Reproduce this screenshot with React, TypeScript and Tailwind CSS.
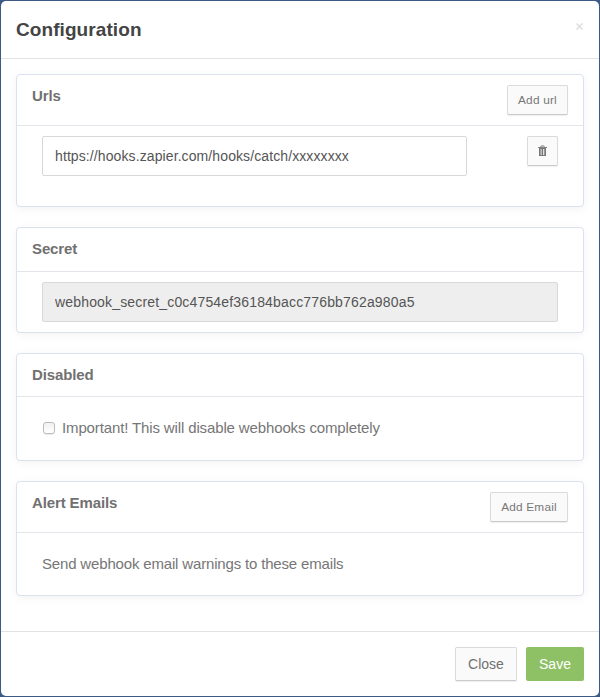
import type { ReactNode } from "react";

const smallButton =
  "flex h-[30px] shrink-0 items-center justify-center rounded-[2px] border border-[#dadada] border-b-[#cacaca] bg-[#fafafa] text-[11.8px] leading-[18px] tracking-[0.22px] text-[#777] shadow-[0_1px_1px_rgba(90,90,90,0.1)]";

function Panel({
  title,
  action,
  className,
  headClass,
  children,
}: {
  title: string;
  action?: ReactNode;
  className: string;
  headClass: string;
  children: ReactNode;
}) {
  return (
    <section
      className={`flex flex-col rounded-[4px] border border-[#dbe2ef] bg-white shadow-[0_2px_10px_rgba(0,0,0,0.05)] ${className}`}
    >
      <header
        className={`flex shrink-0 items-start justify-between border-b border-[#e2e5ea] px-[15px] pt-[10px] ${headClass}`}
      >
        <h2 className="text-[15px] leading-[22px] font-bold tracking-[-0.12px] text-[#717171]">{title}</h2>
        {action}
      </header>
      <div className="flex-1 px-[25px]">{children}</div>
    </section>
  );
}

function TrashIcon() {
  return (
    <svg width="9" height="11" viewBox="0 0 9 11" shapeRendering="crispEdges" className="mb-[2px]">
      <path d="M3 0h3v1H3z" fill="#b8b8b8" />
      <path d="M2 1h5v1H2z" fill="#b0b0b0" />
      <path d="M0 2h9v1H0z" fill="#858585" />
      <path d="M1 3h7v8H1z" fill="#777" />
      <path d="M2 4h1v6H2z" fill="#a2a2a2" />
      <path d="M3 4h1v6H3z" fill="#bcbcbc" />
      <path d="M5 4h1v6H5z" fill="#e2e2e2" />
      <path d="M6 4h1v6H6z" fill="#999" />
    </svg>
  );
}

export default function App() {
  return (
    <div className="h-[697px] w-[600px] bg-[#3d5a85] p-px font-['Liberation_Sans',Arial,sans-serif]">
      <div className="flex h-[695px] w-[598px] flex-col rounded-[5px] bg-white">
        <header className="flex h-[58px] shrink-0 items-start justify-between border-b border-[#e2e2e2] px-[15px]">
          <h1 className="pt-[15px] text-[19px] leading-[27px] font-bold tracking-[0.08px] text-[#444]">
            Configuration
          </h1>
          <button aria-label="Close dialog" className="mt-[22px] mr-[1px] flex">
            <svg width="7" height="7" viewBox="0 0 7 7" stroke="#dedede" strokeWidth="1.5">
              <path d="M.5.5l6 6M6.5.5l-6 6" />
            </svg>
          </button>
        </header>

        <main className="flex flex-1 flex-col gap-5 px-[15px] pt-[15px]">
          <Panel
            title="Urls"
            className="h-[133px]"
            headClass="h-[51px]"
            action={<button className={`w-[61px] ${smallButton}`}>Add url</button>}
          >
            <div className="flex items-start justify-between pt-[10px]">
              <input
                readOnly
                value="https://hooks.zapier.com/hooks/catch/xxxxxxxx"
                className="h-10 w-[425px] rounded-[2px] border border-[#d8d8d8] bg-white px-3 text-[14px] tracking-[0.1px] text-[#555] outline-none"
              />
              <button aria-label="Delete url" className={`w-[31px] ${smallButton}`}>
                <TrashIcon />
              </button>
            </div>
          </Panel>

          <Panel title="Secret" className="h-[106px]" headClass="h-[44px]">
            <div className="pt-[10px]">
              <input
                readOnly
                value="webhook_secret_c0c4754ef36184bacc776bb762a980a5"
                className="h-10 w-full rounded-[2px] border border-[#d8d8d8] bg-[#eee] px-3 text-[14px] tracking-[0.165px] text-[#555] outline-none"
              />
            </div>
          </Panel>

          <Panel title="Disabled" className="h-[108px]" headClass="h-[43px]">
            <label className="flex items-center pt-5 text-[15px] leading-[22px] tracking-[-0.13px] text-[#767676]">
              <input
                type="checkbox"
                className="-mt-px mr-[7px] ml-px size-3 appearance-none rounded-[3px] border border-[#bcbcbc] bg-linear-to-b from-[#f1f1f1] to-white shadow-[0_1px_1px_rgba(0,0,0,0.08)]"
              />
              Important! This will disable webhooks completely
            </label>
          </Panel>

          <Panel
            title="Alert Emails"
            className="h-[115px]"
            headClass="h-[51px]"
            action={<button className={`w-[78px] ${smallButton}`}>Add Email</button>}
          >
            <p className="pt-5 text-[15px] leading-[22px] tracking-[-0.165px] text-[#767676]">
              Send webhook email warnings to these emails
            </p>
          </Panel>
        </main>

        <footer className="flex h-[65px] shrink-0 items-start justify-end gap-[9px] border-t border-[#e2e2e2] px-[15px] pt-[15px] text-[14px]">
          <button className="h-[34px] w-[62px] rounded-[2px] border border-[#dadada] border-b-[#cacaca] bg-[#fafafa] text-[#717171] shadow-[0_1px_1px_rgba(90,90,90,0.1)]">
            Close
          </button>
          <button className="h-[34px] w-[58px] rounded-[2px] bg-[#8ec165] text-white">Save</button>
        </footer>
      </div>
    </div>
  );
}
